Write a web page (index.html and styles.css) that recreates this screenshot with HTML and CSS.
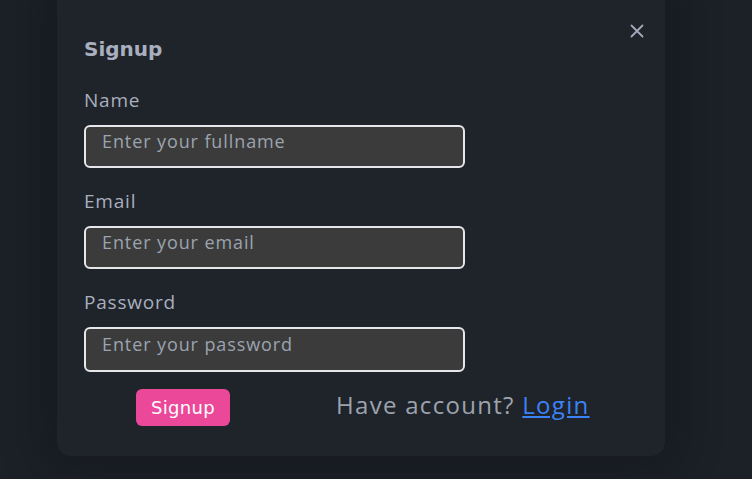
FILE: index.html
```html
<!DOCTYPE html>
<html>
<head>
<meta charset="utf-8">
<link rel="stylesheet" href="styles.css">
</head>
<body>
<div class="modal">
  <button class="close" aria-label="Close">
    <svg width="14" height="14" viewBox="0 0 14 14"><path d="M1.5 1.5 L12.5 12.5 M12.5 1.5 L1.5 12.5" stroke="#a3a9b8" stroke-width="1.8" stroke-linecap="round"/></svg>
  </button>
  <h2 class="title">Signup</h2>
  <form class="form">
    <label class="label">Name</label>
    <input class="field" type="text" placeholder="Enter your fullname">
    <label class="label">Email</label>
    <input class="field" type="email" placeholder="Enter your email">
    <label class="label">Password</label>
    <input class="field field-last" type="password" placeholder="Enter your password">
    <div class="actions">
      <button type="button" class="btn">Signup</button>
      <p class="switch">Have account? <a href="#" class="link">Login</a></p>
    </div>
  </form>
</div>
</body>
</html>
```
FILE: styles.css
```css
html, body {
  margin: 0;
  height: 100%;
  background: #1c2027;
  overflow: hidden;
}
.modal {
  position: relative;
  box-sizing: border-box;
  width: 608px;
  margin: -20px 0 0 57px;
  padding: 54px 28px 29px 27px;
  background: #1f232a;
  border-radius: 14px;
  box-shadow: 0 0 40px 14px rgba(14, 16, 20, 0.35);
}
.close {
  position: absolute;
  top: 44px;
  right: 21px;
  padding: 0;
  border: 0;
  background: none;
  width: 14px;
  height: 14px;
  display: flex;
}
.title {
  margin: 0;
  font-family: "DejaVu Sans", sans-serif;
  font-weight: 700;
  font-size: 20px;
  line-height: 30px;
  color: #a9afbe;
}
.form {
  display: flex;
  flex-direction: column;
  align-items: flex-start;
  margin-top: 24px;
}
.label {
  font-family: "Open Sans", sans-serif;
  font-size: 19px;
  letter-spacing: 0.8px;
  line-height: 24px;
  color: #a9afbe;
  margin-bottom: 13px;
}
.field {
  box-sizing: border-box;
  width: 381px;
  height: 43px;
  margin-bottom: 21px;
  padding: 0 0 12px 16px;
  background: #3b3b3b;
  border: 2px solid #e5e7eb;
  border-radius: 6px;
  font-family: "Open Sans", sans-serif;
  font-size: 18px;
  letter-spacing: 0.9px;
  color: #d0d4dc;
  outline: none;
}
.field::placeholder { color: #9ca3af; }
.field-last { height: 45px; margin-bottom: 16px; }
.actions {
  display: flex;
  align-items: center;
  width: 100%;
}
.btn {
  margin-left: 52px;
  width: 94px;
  height: 37px;
  border: 0;
  border-radius: 6px;
  background: #ec4899;
  color: #fff;
  font-family: "DejaVu Sans", sans-serif;
  font-size: 18px;
  letter-spacing: 0.3px;
}
.switch {
  margin: 0 0 6px 106px;
  font-family: "Open Sans", sans-serif;
  font-size: 24px;
  letter-spacing: 1.3px;
  color: #9ca3af;
}
.link {
  color: #3b82f6;
  text-decoration: underline;
}
```
